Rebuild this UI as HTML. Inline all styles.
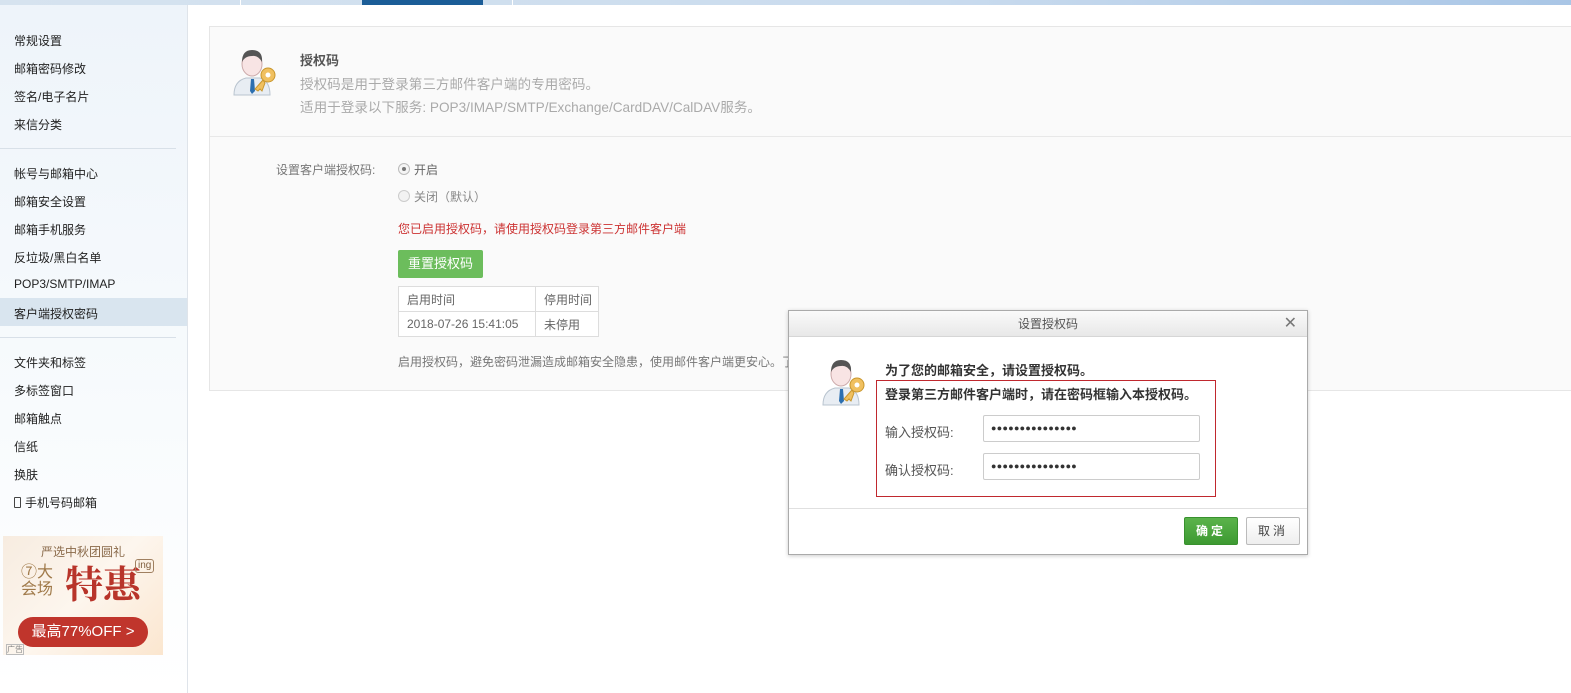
<!DOCTYPE html>
<html><head><meta charset="utf-8"><style>
*{margin:0;padding:0;box-sizing:border-box}
body{width:1571px;height:693px;overflow:hidden;background:#fff;font-family:"Liberation Sans","Noto Sans CJK SC",sans-serif;font-size:12px;color:#333;position:relative}
.abs{position:absolute}
#top{left:0;top:0;width:1571px;height:5px;background:linear-gradient(90deg,#d6e3ef,#c9dbee 60%,#a9c6e6)}
#side{left:0;top:5px;width:188px;height:688px;background:linear-gradient(180deg,#eef4fa,#f8fbfd 60%,#fff);border-right:1px solid #dfe4ea}
.it{position:absolute;left:14px;font-size:12px;color:#222}
.sep{position:absolute;left:0;width:176px;height:1px;background:#d8e0e8}
#panel{left:209px;top:26px;width:1362px;height:365px;background:#fafafa;border:1px solid #e6e6e6;border-right:none}
.g{color:#aaa;font-size:13.6px}
.av svg{display:block}
.pw{font-size:9px;letter-spacing:0.3px}
</style></head><body>
<div id="top" class="abs"></div>
<div class="abs" style="left:362px;top:0;width:121px;height:5px;background:#1b5d97"></div>
<div class="abs" style="left:240px;top:0;width:1px;height:5px;background:#fff"></div>
<div class="abs" style="left:512px;top:0;width:1px;height:5px;background:#fff"></div>
<div id="side" class="abs">
<div class="it" style="top:27px">常规设置</div>
<div class="it" style="top:55px">邮箱密码修改</div>
<div class="it" style="top:83px">签名/电子名片</div>
<div class="it" style="top:111px">来信分类</div>
<div class="sep" style="top:143px"></div>
<div class="it" style="top:160px">帐号与邮箱中心</div>
<div class="it" style="top:188px">邮箱安全设置</div>
<div class="it" style="top:216px">邮箱手机服务</div>
<div class="it" style="top:244px">反垃圾/黑白名单</div>
<div class="it" style="top:272px">POP3/SMTP/IMAP</div>
<div style="position:absolute;left:0;top:293px;width:187px;height:28px;background:#d9e5ef"></div>
<div class="it" style="top:300px">客户端授权密码</div>
<div class="sep" style="top:332px"></div>
<div class="it" style="top:349px">文件夹和标签</div>
<div class="it" style="top:377px">多标签窗口</div>
<div class="it" style="top:405px">邮箱触点</div>
<div class="it" style="top:433px">信纸</div>
<div class="it" style="top:461px">换肤</div>
<div class="it" style="top:489px"><span style="display:inline-block;width:7px;height:11px;border:1.5px solid #444;border-radius:1px;vertical-align:-1px;margin-right:4px"></span>手机号码邮箱</div>
<div style="position:absolute;left:3px;top:531px;width:160px;height:119px;background:linear-gradient(135deg,#f7ece0,#fdf6ee 50%,#fbe6cf)">
<div style="position:absolute;left:38px;top:7px;font-size:12px;color:#8a6a4a">严选中秋团圆礼</div>
<div style="position:absolute;left:18px;top:28px;font-size:16px;line-height:17px;color:#a07a4a">⑦大<br>会场</div>
<div style="position:absolute;left:62px;top:25px;font-size:38px;font-weight:bold;line-height:42px;color:#b8342a;font-family:'Noto Serif CJK SC',serif">特惠</div>
<div style="position:absolute;left:132px;top:23px;font-size:10px;border:1px solid #a08060;border-radius:3px;padding:0 2px;color:#806040;line-height:12px">ing</div>
<div style="position:absolute;left:15px;top:81px;width:130px;height:30px;border-radius:15px;background:#c0352c;color:#fff;font-size:15px;text-align:center;line-height:30px">最高77%OFF &gt;</div>
<div style="position:absolute;left:3px;top:108px;font-size:8px;color:#888;border:1px solid #bbb;line-height:9px">广告</div>
</div>
</div>
<div id="panel" class="abs">
<div class="abs av" style="left:20px;top:18px"><svg width="50" height="52" viewBox="0 0 50 52"><path d="M4 50 Q4 36 16 33 L30 33 Q40 36 40 50Z" fill="#e8edf3" stroke="#b9c4cf"/><path d="M21 34 L24 34 L25 46 L22 49 L20 46Z" fill="#2c6fb0"/><ellipse cx="22" cy="19" rx="10" ry="12" fill="#f8e4e4" stroke="#caa"/><path d="M12 17 Q12 5 22 5 Q33 5 32 17 Q28 10 22 11 Q15 11 12 17Z" fill="#555"/><circle cx="38" cy="30" r="7" fill="#f0c060" stroke="#c9962c"/><circle cx="38" cy="30" r="2.5" fill="#fff"/><path d="M33 35 L25 44 L28 46 L30 44 L32 46 L35 38Z" fill="#f0c060" stroke="#c9962c"/></svg></div>
<div class="abs" style="left:90px;top:23px;font-size:13px;color:#555;font-weight:bold">授权码</div>
<div class="abs g" style="left:90px;top:46px">授权码是用于登录第三方邮件客户端的专用密码。</div>
<div class="abs g" style="left:90px;top:69px">适用于登录以下服务: POP3/IMAP/SMTP/Exchange/CardDAV/CalDAV服务。</div>
<div class="abs" style="left:0;top:109px;width:1362px;height:1px;background:#e8e8e8"></div>
<div class="abs" style="left:66px;top:134px;color:#777">设置客户端授权码:</div>
<div class="abs" style="left:188px;top:136px;width:12px;height:12px;border-radius:50%;border:1px solid #bbb;background:#f4f4f4"><div style="width:4px;height:4px;border-radius:50%;background:#777;margin:3px"></div></div>
<div class="abs" style="left:204px;top:134px;color:#666">开启</div>
<div class="abs" style="left:188px;top:163px;width:12px;height:12px;border-radius:50%;border:1px solid #ccc;background:#f2f2f2"></div>
<div class="abs" style="left:204px;top:161px;color:#888">关闭（默认）</div>
<div class="abs" style="left:188px;top:193px;color:#c33">您已启用授权码，请使用授权码登录第三方邮件客户端</div>
<div class="abs" style="left:188px;top:223px;width:85px;height:28px;background:#6cbd5c;border-radius:2px;color:#fff;font-size:13px;text-align:center;line-height:28px">重置授权码</div>
<table class="abs" style="left:188px;top:259px;border-collapse:collapse;color:#666;font-size:12px;background:#fff">
<tr style="height:25px"><td style="border:1px solid #ddd;width:137px;padding-left:8px">启用时间</td><td style="border:1px solid #ddd;width:63px;padding-left:8px">停用时间</td></tr>
<tr style="height:25px"><td style="border:1px solid #ddd;padding-left:8px">2018-07-26 15:41:05</td><td style="border:1px solid #ddd;padding-left:8px">未停用</td></tr>
</table>
<div class="abs" style="left:188px;top:326px;color:#777">启用授权码，避免密码泄漏造成邮箱安全隐患，使用邮件客户端更安心。了</div>
</div>
<div class="abs" style="left:788px;top:310px;width:520px;height:245px;background:#fff;border:1px solid #aaa;box-shadow:0 1px 4px rgba(0,0,0,.2)">
<div style="height:26px;background:linear-gradient(#fafafa,#e8e8e8);border-bottom:1px solid #d6d6d6;text-align:center;line-height:26px;color:#555">设置授权码<span style="position:absolute;right:10px;top:0;font-size:16px;color:#777">✕</span></div>
<div class="abs av" style="left:30px;top:44px"><svg width="50" height="52" viewBox="0 0 50 52"><path d="M4 50 Q4 36 16 33 L30 33 Q40 36 40 50Z" fill="#e8edf3" stroke="#b9c4cf"/><path d="M21 34 L24 34 L25 46 L22 49 L20 46Z" fill="#2c6fb0"/><ellipse cx="22" cy="19" rx="10" ry="12" fill="#f8e4e4" stroke="#caa"/><path d="M12 17 Q12 5 22 5 Q33 5 32 17 Q28 10 22 11 Q15 11 12 17Z" fill="#555"/><circle cx="38" cy="30" r="7" fill="#f0c060" stroke="#c9962c"/><circle cx="38" cy="30" r="2.5" fill="#fff"/><path d="M33 35 L25 44 L28 46 L30 44 L32 46 L35 38Z" fill="#f0c060" stroke="#c9962c"/></svg></div>
<div class="abs" style="left:96px;top:49px;font-size:13px;font-weight:bold;color:#333">为了您的邮箱安全，请设置授权码。</div>
<div class="abs" style="left:87px;top:69px;width:340px;height:117px;border:1px solid #c0282e"></div>
<div class="abs" style="left:96px;top:73px;font-size:13px;font-weight:bold;color:#333">登录第三方邮件客户端时，请在密码框输入本授权码。</div>
<div class="abs" style="left:96px;top:111px;font-size:13px;color:#555">输入授权码:</div>
<div class="abs pw" style="left:194px;top:104px;width:217px;height:27px;border:1px solid #ccc;border-radius:2px;padding-left:7px;line-height:25px">●●●●●●●●●●●●●●●</div>
<div class="abs" style="left:96px;top:149px;font-size:13px;color:#555">确认授权码:</div>
<div class="abs pw" style="left:194px;top:142px;width:217px;height:27px;border:1px solid #ccc;border-radius:2px;padding-left:7px;line-height:25px">●●●●●●●●●●●●●●●</div>
<div class="abs" style="left:0;top:197px;width:518px;height:1px;background:#e0e0e0"></div>
<div class="abs" style="left:395px;top:206px;width:54px;height:28px;background:linear-gradient(#5bb34b,#3d9a32);border:1px solid #38912e;border-radius:2px;color:#fff;font-weight:bold;text-align:center;line-height:26px;letter-spacing:3px">确定</div>
<div class="abs" style="left:457px;top:206px;width:54px;height:28px;background:linear-gradient(#fff,#eee);border:1px solid #bbb;border-radius:2px;color:#444;text-align:center;line-height:26px;letter-spacing:3px">取消</div>
</div>
</body></html>
